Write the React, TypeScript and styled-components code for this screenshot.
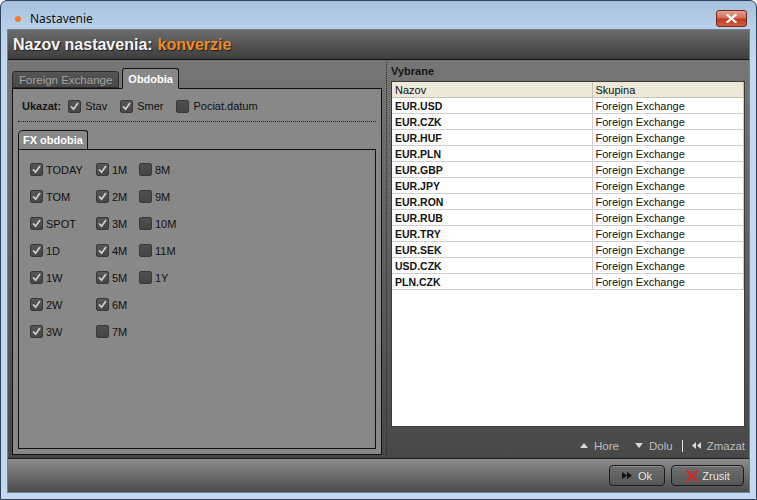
import * as React from 'react';
import styled, { createGlobalStyle } from 'styled-components';

const GlobalStyle = createGlobalStyle`
  html, body {
    margin: 0;
    padding: 0;
    background: #ffffff;
  }
  body {
    font-family: "Liberation Sans", Arial, sans-serif;
    font-size: 11px;
  }
`;

const Window = styled.div`
  width: 757px;
  height: 500px;
  box-sizing: border-box;
  border: 1px solid #2b4259;
  border-radius: 7px 7px 0 0;
  background: linear-gradient(#a6c0de 0, #b8cfe9 24px, #c4d9ef 60px, #c4d9ef 100%);
  padding: 0 7px 7px;
  display: flex;
  flex-direction: column;
  overflow: hidden;
`;

const TitleBar = styled.div`
  height: 29px;
  box-sizing: border-box;
  padding-top: 6px;
  display: flex;
  align-items: center;
`;

const TitleDot = styled.span`
  width: 6px;
  height: 6px;
  border-radius: 50%;
  background: #ef7d2c;
  margin-left: 7px;
  margin-right: 9px;
`;

const TitleText = styled.span`
  flex: 1;
  font-family: "Noto Sans", "Liberation Sans", sans-serif;
  font-size: 12px;
  color: #111;
`;

const CloseButton = styled.div`
  width: 31px;
  height: 17px;
  box-sizing: border-box;
  margin-right: 2px;
  border: 1px solid #6e2a20;
  border-radius: 3px;
  background: linear-gradient(#e3a191 0, #d2705d 45%, #c03a22 55%, #d35c3c 100%);
  display: flex;
  align-items: center;
  justify-content: center;
`;

const Client = styled.div`
  flex: 1;
  display: flex;
  flex-direction: column;
  box-shadow: 0 0 0 1px #6d8198;
`;

const Header = styled.div`
  height: 29px;
  border-bottom: 1px solid #101010;
  padding-left: 5px;
  display: flex;
  align-items: center;
  background: linear-gradient(#6c6c6c, #3d3d3d);
  font-size: 16px;
  font-weight: bold;
  color: #f4f4f4;
  text-shadow: 1px 1px 1px #1e1e1e;
`;

const Accent = styled.span`
  color: #f28a26;
  margin-left: 5px;
`;

const Main = styled.div`
  flex: 1;
  display: flex;
  background: linear-gradient(#767676, #484848);
  min-height: 0;
`;

const LeftPane = styled.div`
  width: 377px;
  box-sizing: border-box;
  padding: 8px 3px 3px 4px;
  display: flex;
  flex-direction: column;
`;

const TabStrip = styled.div`
  display: flex;
  align-items: flex-end;
  gap: 3px;
`;

const Tab = styled.div<{ $active?: boolean }>`
  box-sizing: border-box;
  height: ${({ $active }) => ($active ? '21px' : '17px')};
  padding: 0 ${({ $active }) => ($active ? '5px' : '6px')};
  border: 1px solid ${({ $active }) => ($active ? '#111' : '#2a2a2a')};
  border-bottom-color: ${({ $active }) => ($active ? '#888' : '#2a2a2a')};
  margin-bottom: ${({ $active }) => ($active ? '-1px' : '0')};
  border-radius: 3px 3px 0 0;
  background: ${({ $active }) => ($active ? '#888888' : 'linear-gradient(#555, #474747)')};
  color: ${({ $active }) => ($active ? '#ffffff' : '#a2a2a2')};
  font-weight: ${({ $active }) => ($active ? 'bold' : 'normal')};
  font-size: ${({ $active }) => ($active ? '11px' : '11.5px')};
  display: flex;
  align-items: center;
  z-index: 1;
`;

const TabPanel = styled.div`
  flex: 1;
  border: 1px solid #111;
  background: #888888;
  padding: 9px 5px 5px;
  display: flex;
  flex-direction: column;
`;

const ShowRow = styled.div`
  height: 16px;
  margin-left: 4px;
  display: flex;
  align-items: center;
`;

const ShowLabel = styled.span`
  font-weight: bold;
  color: #151515;
  margin-right: 7px;
`;

const Option = styled.label`
  display: flex;
  align-items: center;
  gap: 4px;
  margin-right: 13px;
  color: #111;
  white-space: nowrap;
`;

const DottedRule = styled.div`
  border-top: 1px dotted #222;
  margin: 7px 0 8px;
`;

const GroupTab = styled.div`
  align-self: flex-start;
  box-sizing: border-box;
  width: 70px;
  height: 20px;
  margin-bottom: -1px;
  padding-left: 4px;
  border: 1px solid #111;
  border-bottom-color: #888;
  border-radius: 5px 3px 0 0;
  background: #888;
  color: #fff;
  font-weight: bold;
  display: flex;
  align-items: center;
`;

const GroupBox = styled.div`
  flex: 1;
  border: 1px solid #111;
  padding: 6px 0 0 11px;
`;

const PeriodGrid = styled.div`
  display: grid;
  grid-auto-flow: column;
  grid-template-rows: repeat(7, 27px);
  grid-template-columns: 66px 43px auto;
`;

const PeriodItem = styled.label`
  display: flex;
  align-items: center;
  gap: 3px;
  color: #111;
`;

const Box = styled.span<{ $checked?: boolean }>`
  width: 13px;
  height: 13px;
  box-sizing: border-box;
  border: 1px solid #383838;
  border-radius: 2px;
  background: ${({ $checked }) => ($checked ? 'linear-gradient(#575757, #464646)' : 'linear-gradient(#4f4f4f, #454545)')};
  display: flex;
  align-items: center;
  justify-content: center;
  flex: none;
`;

const Splitter = styled.div`
  width: 0;
  margin: 2px 1px 3px;
  border-left: 1px dotted #262626;
`;

const RightPane = styled.div`
  flex: 1;
  padding: 4px 4px 0 3px;
  display: flex;
  flex-direction: column;
  min-width: 0;
`;

const PaneTitle = styled.div`
  height: 14px;
  line-height: 14px;
  margin-bottom: 3px;
  font-weight: bold;
  color: #151515;
`;

const TableWrap = styled.div`
  height: 346px;
  box-sizing: border-box;
  border: 1px solid #3a3a3a;
  background: #ffffff;
  overflow: hidden;
`;

const Table = styled.table`
  width: 100%;
  border-collapse: collapse;
  table-layout: fixed;
`;

const HeadCell = styled.th`
  height: 15px;
  padding: 0 3px;
  text-align: left;
  font-weight: normal;
  color: #111;
  background: #ece9d8;
  border-right: 1px solid #c6c3b5;
  border-bottom: 1px solid #c6c3b5;
  white-space: nowrap;
`;

const Cell = styled.td<{ $bold?: boolean }>`
  height: 15px;
  padding: 0 3px;
  border-right: 1px solid #cfcfcf;
  border-bottom: 1px solid #cfcfcf;
  color: #111;
  font-size: ${({ $bold }) => ($bold ? '10.5px' : '11px')};
  font-weight: ${({ $bold }) => ($bold ? 'bold' : 'normal')};
  white-space: nowrap;
`;

const Controls = styled.div`
  flex: 1;
  display: flex;
  justify-content: flex-end;
  align-items: center;
  padding-top: 6px;
  color: #bdbdbd;
  font-size: 11.5px;
`;

const Action = styled.span`
  display: flex;
  align-items: center;
  gap: 6px;
  margin-left: 16px;
`;

const Divider = styled.span`
  width: 1px;
  height: 12px;
  background: #e2e2e2;
  margin: 0 9px 0 9px;
`;

const Footer = styled.div`
  height: 33px;
  border-top: 1px solid #1c1c1c;
  background: linear-gradient(#8c8c8c, #4b4b4b);
  display: flex;
  justify-content: flex-end;
  align-items: center;
  gap: 6px;
  padding-right: 5px;
`;

const Button = styled.div<{ $width: number }>`
  width: ${({ $width }) => $width}px;
  height: 21px;
  box-sizing: border-box;
  border: 1px solid #1b1b1b;
  border-radius: 4px;
  background: linear-gradient(#6e6e6e, #565656);
  box-shadow: inset 0 1px 0 #8a8a8a;
  color: #e4e4e4;
  display: flex;
  align-items: center;
  justify-content: center;
  gap: 3px;
`;

const Check = () => (
  <svg width="9" height="9" viewBox="0 0 9 9">
    <path d="M1.5 5 L3.6 7.2 L7.6 1.6" fill="none" stroke="#cfcfcf" strokeWidth="1.8" strokeLinecap="round" />
  </svg>
);

const CheckBox = ({ checked }: { checked?: boolean }) => (
  <Box $checked={checked}>{checked && <Check />}</Box>
);

const periods: [string, boolean][] = [
  ['TODAY', true], ['TOM', true], ['SPOT', true], ['1D', true], ['1W', true], ['2W', true], ['3W', true],
  ['1M', true], ['2M', true], ['3M', true], ['4M', true], ['5M', true], ['6M', true], ['7M', false],
  ['8M', false], ['9M', false], ['10M', false], ['11M', false], ['1Y', false],
];

const pairs = [
  'EUR.USD', 'EUR.CZK', 'EUR.HUF', 'EUR.PLN', 'EUR.GBP', 'EUR.JPY',
  'EUR.RON', 'EUR.RUB', 'EUR.TRY', 'EUR.SEK', 'USD.CZK', 'PLN.CZK',
];

export default function App() {
  return (
    <>
      <GlobalStyle />
      <Window>
        <TitleBar>
          <TitleDot />
          <TitleText>Nastavenie</TitleText>
          <CloseButton>
            <svg width="11" height="9" viewBox="0 0 11 9">
              <path d="M1.5 1 L9.5 8 M9.5 1 L1.5 8" stroke="#ffffff" strokeWidth="2.2" strokeLinecap="square" />
            </svg>
          </CloseButton>
        </TitleBar>
        <Client>
          <Header>
            Nazov nastavenia:<Accent>konverzie</Accent>
          </Header>
          <Main>
            <LeftPane>
              <TabStrip>
                <Tab>Foreign Exchange</Tab>
                <Tab $active>Obdobia</Tab>
              </TabStrip>
              <TabPanel>
                <ShowRow>
                  <ShowLabel>Ukazat:</ShowLabel>
                  <Option><CheckBox checked />Stav</Option>
                  <Option><CheckBox checked />Smer</Option>
                  <Option><CheckBox />Pociat.datum</Option>
                </ShowRow>
                <DottedRule />
                <GroupTab>FX obdobia</GroupTab>
                <GroupBox>
                  <PeriodGrid>
                    {periods.map(([name, on]) => (
                      <PeriodItem key={name}>
                        <CheckBox checked={on} />
                        {name}
                      </PeriodItem>
                    ))}
                  </PeriodGrid>
                </GroupBox>
              </TabPanel>
            </LeftPane>
            <Splitter />
            <RightPane>
              <PaneTitle>Vybrane</PaneTitle>
              <TableWrap>
                <Table>
                  <colgroup>
                    <col style={{ width: 200 }} />
                    <col />
                  </colgroup>
                  <thead>
                    <tr>
                      <HeadCell>Nazov</HeadCell>
                      <HeadCell>Skupina</HeadCell>
                    </tr>
                  </thead>
                  <tbody>
                    {pairs.map((p) => (
                      <tr key={p}>
                        <Cell $bold>{p}</Cell>
                        <Cell>Foreign Exchange</Cell>
                      </tr>
                    ))}
                  </tbody>
                </Table>
              </TableWrap>
              <Controls>
                <Action>
                  <svg width="8" height="5" viewBox="0 0 8 5"><path d="M0 5 L4 0 L8 5 Z" fill="#d8d8d8" /></svg>
                  Hore
                </Action>
                <Action>
                  <svg width="8" height="5" viewBox="0 0 8 5"><path d="M0 0 L8 0 L4 5 Z" fill="#d8d8d8" /></svg>
                  Dolu
                </Action>
                <Divider />
                <Action style={{ marginLeft: 0 }}>
                  <svg width="9" height="7" viewBox="0 0 9 7"><path d="M4 0 L0 3.5 L4 7 Z M9 0 L5 3.5 L9 7 Z" fill="#d8d8d8" /></svg>
                  Zmazat
                </Action>
              </Controls>
            </RightPane>
          </Main>
          <Footer>
            <Button $width={56}>
              <svg width="10" height="7" viewBox="0 0 10 7"><path d="M0 0 L5 3.5 L0 7 Z M5 0 L10 3.5 L5 7 Z" fill="#111" /></svg>
              &nbsp;Ok
            </Button>
            <Button $width={73}>
              <svg width="14" height="14" viewBox="0 0 14 14">
                <path d="M2 2 L12 12 M12 2 L2 12" stroke="#e0231c" strokeWidth="2" strokeLinecap="round" />
              </svg>
              Zrusit
            </Button>
          </Footer>
        </Client>
      </Window>
    </>
  );
}
